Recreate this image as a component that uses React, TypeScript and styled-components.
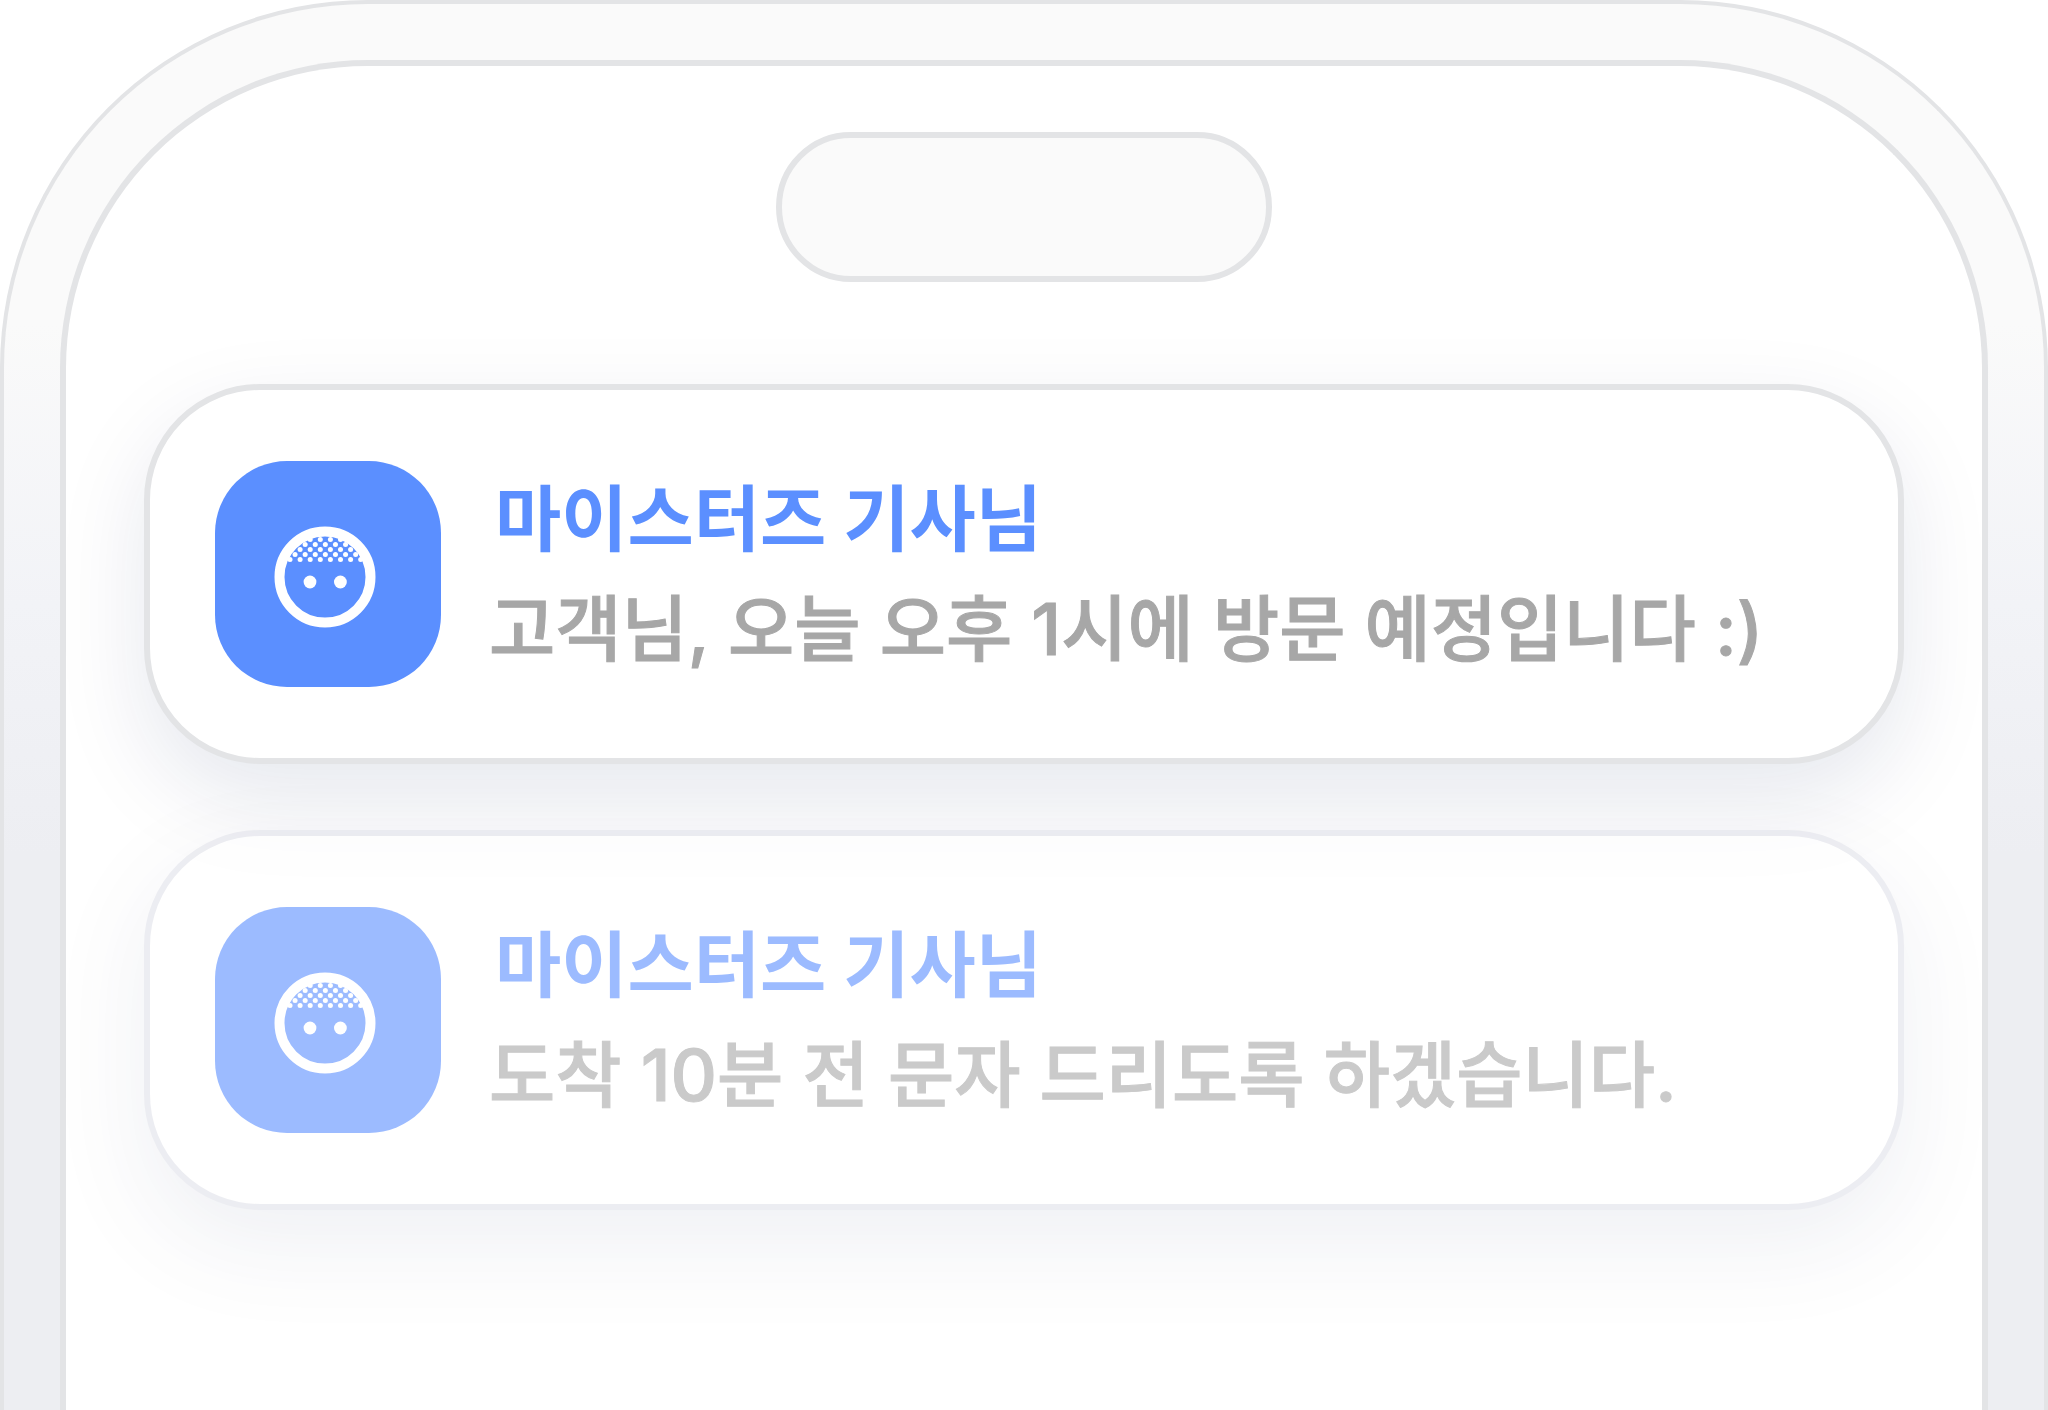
import React, { useId } from "react";
import styled, { createGlobalStyle } from "styled-components";

const GlobalStyle = createGlobalStyle`
  * {
    box-sizing: border-box;
  }

  body {
    margin: 0;
    background: #ffffff;
    font-family: Inter, "Noto Sans CJK KR", sans-serif;
  }
`;

const Phone = styled.main`
  display: flex;
  min-height: 100vh;
  padding: 56px 56px 0;
  overflow: hidden;
  border: 4px solid #e3e4e6;
  border-bottom: 0;
  border-radius: 368px 368px 0 0;
  background: linear-gradient(#fafafa 320px, #f2f3f7 600px, #edeef2 850px);
`;

const Screen = styled.div`
  display: flex;
  flex: 1;
  flex-direction: column;
  align-items: center;
  gap: 102px;
  padding: 66px 78px;
  border: 6px solid #e3e4e6;
  border-bottom: 0;
  border-radius: 308px 308px 0 0;
  background: #ffffff;
`;

const Island = styled.div`
  width: 496px;
  height: 150px;
  border: 6px solid #e3e4e6;
  border-radius: 75px;
  background: #fafafa;
`;

const Notifications = styled.ul`
  display: flex;
  flex-direction: column;
  align-self: stretch;
  gap: 66px;
  margin: 0;
  padding: 0;
  list-style: none;
`;

const Card = styled.li<{ $faded?: boolean }>`
  display: flex;
  align-items: center;
  gap: 48px;
  padding: 71px 65px;
  border: 6px solid ${(p) => (p.$faded ? "#e1e2ea" : "#e3e4e6")};
  border-radius: 116px;
  background: #ffffff;
  box-shadow: 0 34px 92px rgba(10, 30, 90, 0.1);
  opacity: ${(p) => (p.$faded ? 0.6 : 1)};
`;

const Avatar = styled.svg`
  flex: none;
  width: 226px;
  height: 226px;
  border-radius: 72px;
  background: #5b8fff;
`;

const Message = styled.div`
  min-width: 0;
  font-size: 72px;
  line-height: 110px;
`;

const Sender = styled.h2`
  margin: 0;
  padding-left: 6px;
  color: #5b8fff;
  font-size: inherit;
  font-weight: 700;
`;

const Body = styled.p`
  margin: 0;
  color: #a7a7a7;
  font-weight: 500;
  -webkit-text-stroke: 1px #a7a7a7;
`;

const hairRows = [98, 93, 88, 83, 78];

function FaceIcon() {
  const clipId = useId();
  return (
    <Avatar viewBox="0 0 226 226" aria-hidden="true">
      <clipPath id={clipId}>
        <circle cx="110" cy="116" r="42" />
      </clipPath>
      <g fill="#ffffff" clipPath={`url(#${clipId})`}>
        {hairRows.map((y, row) =>
          Array.from({ length: 10 }, (_, i) => (
            <circle
              key={`${row}-${i}`}
              cx={64.9 + i * 10.1 - (row % 2 ? 5.05 : 0)}
              cy={y + 0.5}
              r="2.5"
            />
          ))
        )}
      </g>
      <circle cx="110" cy="116" r="45.5" fill="none" stroke="#ffffff" strokeWidth="10" />
      <circle cx="95" cy="121" r="6.4" fill="#ffffff" />
      <circle cx="125.4" cy="121" r="6.4" fill="#ffffff" />
    </Avatar>
  );
}

const messages = [
  { sender: "마이스터즈 기사님", text: "고객님, 오늘 오후 1시에 방문 예정입니다 :)", faded: false },
  { sender: "마이스터즈 기사님", text: "도착 10분 전 문자 드리도록 하겠습니다.", faded: true },
];

export default function App() {
  return (
    <>
      <GlobalStyle />
      <Phone>
        <Screen>
          <Island />
          <Notifications>
            {messages.map((m) => (
              <Card key={m.text} $faded={m.faded}>
                <FaceIcon />
                <Message>
                  <Sender>{m.sender}</Sender>
                  <Body>{m.text}</Body>
                </Message>
              </Card>
            ))}
          </Notifications>
        </Screen>
      </Phone>
    </>
  );
}
